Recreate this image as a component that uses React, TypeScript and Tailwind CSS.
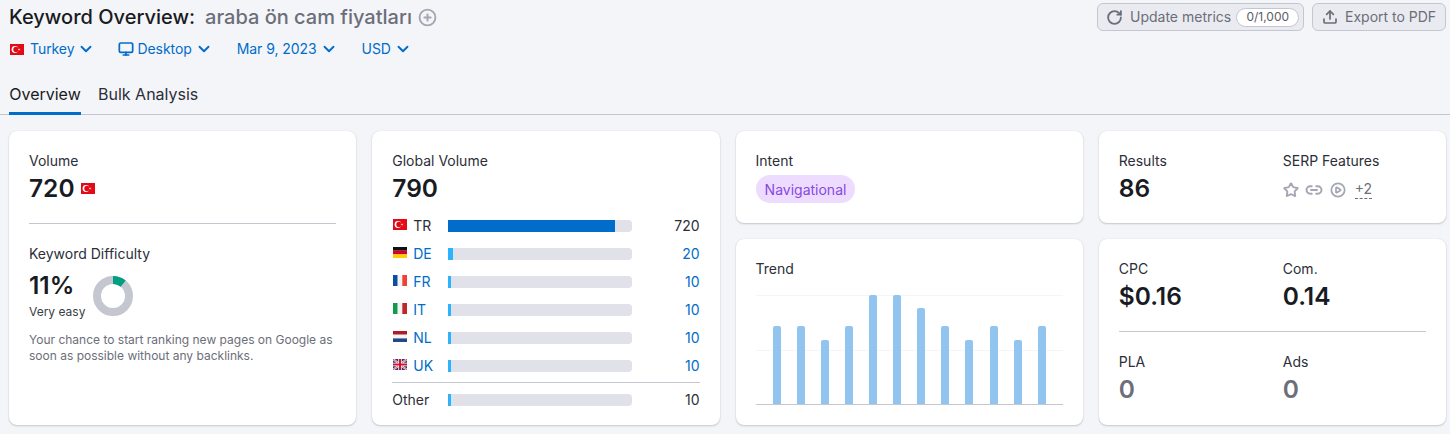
import React from "react";
import { ChevronDown, Monitor, CirclePlus, RotateCw, Upload, Star, Link2, CirclePlay } from "lucide-react";

const Flag = ({ c, className = "" }: { c: string; className?: string }) => (
  <svg width="14" height="11" viewBox="0 0 14 11" className={`shrink-0 ${className}`}>
    {c === "TR" && (
      <>
        <rect width="14" height="11" fill="#e30a17" />
        <circle cx="5" cy="5.5" r="3.4" fill="#fff" />
        <circle cx="6" cy="5.5" r="2.7" fill="#e30a17" />
        <polygon points="7.6,5.5 10.6,4.4 9.4,5.5 10.6,6.6" fill="#fff" />
      </>
    )}
    {c === "DE" && (
      <>
        <rect width="14" height="3.7" fill="#111" />
        <rect y="3.7" width="14" height="3.7" fill="#d80027" />
        <rect y="7.4" width="14" height="3.6" fill="#ffce00" />
      </>
    )}
    {c === "FR" && (
      <>
        <rect width="4.7" height="11" fill="#0b4ea2" />
        <rect x="4.7" width="4.6" height="11" fill="#f4f4f4" />
        <rect x="9.3" width="4.7" height="11" fill="#ef4135" />
      </>
    )}
    {c === "IT" && (
      <>
        <rect width="4.7" height="11" fill="#139a4a" />
        <rect x="4.7" width="4.6" height="11" fill="#f4f4f4" />
        <rect x="9.3" width="4.7" height="11" fill="#c0272d" />
      </>
    )}
    {c === "NL" && (
      <>
        <rect width="14" height="3.7" fill="#ae1c28" />
        <rect y="3.7" width="14" height="3.7" fill="#f4f4f4" />
        <rect y="7.4" width="14" height="3.6" fill="#21468b" />
      </>
    )}
    {c === "UK" && (
      <>
        <rect width="14" height="11" fill="#26377f" />
        <path d="M0 0L14 11M14 0L0 11" stroke="#fff" strokeWidth="2" />
        <path d="M0 0L14 11M14 0L0 11" stroke="#cf142b" strokeWidth="0.8" />
        <path d="M7 0V11M0 5.5H14" stroke="#fff" strokeWidth="3.4" />
        <path d="M7 0V11M0 5.5H14" stroke="#cf142b" strokeWidth="2" />
      </>
    )}
  </svg>
);

const Chev = () => <ChevronDown size={18} strokeWidth={2.5} className="ml-[3px] text-[#006dca] shrink-0" />;

const Label = ({ children }: { children: React.ReactNode }) => (
  <div className="text-sm leading-5 text-[#2c2e38]">{children}</div>
);
const Value = ({ children, muted }: { children: React.ReactNode; muted?: boolean }) => (
  <div className={`mt-px text-[24.5px] leading-8 font-semibold ${muted ? "text-[#6c6e79]" : "text-[#191b23]"}`}>{children}</div>
);
const Card = ({ children, className = "" }: { children: React.ReactNode; className?: string }) => (
  <div className={`rounded-lg bg-white p-5 shadow-[0_1px_2px_rgba(25,27,35,0.2),0_0_1px_rgba(25,27,35,0.15)] ${className}`}>{children}</div>
);

const rows = [
  { c: "TR", v: "720", w: 167, dark: true },
  { c: "DE", v: "20", w: 5 },
  { c: "FR", v: "10", w: 3 },
  { c: "IT", v: "10", w: 3 },
  { c: "NL", v: "10", w: 3 },
  { c: "UK", v: "10", w: 3 },
];

const Bar = ({ w, dark }: { w: number; dark?: boolean }) => (
  <div className="h-3 w-[184px] rounded-r-sm overflow-hidden bg-[#e0e1e9]">
    <div className={`h-full ${dark ? "bg-[#006dca]" : "bg-[#2bb3ff]"}`} style={{ width: w }} />
  </div>
);

const trend = [78, 78, 64, 78, 109, 109, 96, 78, 64, 78, 64, 78];
const barX = [17, 41, 65, 89, 113, 137, 161, 185, 209, 234, 258, 282];

export default function App() {
  return (
    <div className="h-[434px] w-[1450px] overflow-hidden bg-[#f4f5f9] [font-family:Inter,sans-serif] text-[#191b23]">
      <div className="px-[9px] pr-1 pt-[3px]">
        <div className="flex h-7 items-center justify-between">
          <div className="flex items-center text-xl font-medium">
            <span>Keyword Overview:</span>
            <span className="ml-2.5 text-[#6c6e79]">araba ön cam fiyatları</span>
            <CirclePlus size={19} strokeWidth={2.4} className="ml-1.5 text-[#a4a6b3]" />
          </div>
          <div className="flex items-center gap-2 text-sm text-[#6c6e79]">
            <div className="flex h-7 w-[207px] items-center rounded-md border border-[#c4c7cf] bg-[#e9ebf1] pl-[8px]">
              <RotateCw size={17} strokeWidth={2.6} className="text-[#6c6e79]" />
              <span className="ml-[7px]">Update metrics</span>
              <span className="ml-[5px] flex h-[19px] w-[63px] items-center justify-center rounded-full border border-[#c4c7cf] bg-white text-xs text-[#5a5c66]">0/1,000</span>
            </div>
            <div className="flex h-7 w-[134px] items-center rounded-md border border-[#c4c7cf] bg-[#e9ebf1] pl-[9px]">
              <Upload size={16} strokeWidth={2.6} className="text-[#6c6e79]" />
              <span className="ml-[7px]">Export to PDF</span>
            </div>
          </div>
        </div>

        <div className="mt-2 flex h-5 items-center gap-6 text-sm tracking-[-0.07px] text-[#006dca]">
          <div className="flex items-center pl-px">
            <Flag c="TR" />
            <span className="ml-1.5">Turkey</span>
            <Chev />
          </div>
          <div className="flex items-center">
            <Monitor size={16} strokeWidth={2.6} className="-ml-px" />
            <span className="ml-[3px]">Desktop</span>
            <Chev />
          </div>
          <div className="flex items-center">
            <span>Mar 9, 2023</span>
            <Chev />
          </div>
          <div className="flex items-center">
            <span>USD</span>
            <Chev />
          </div>
        </div>
      </div>

      <div className="mt-[15px] flex h-[41px] items-stretch gap-[17px] border-b border-[#c4c7cf] pl-[9px] text-base">
        <div className="-mb-px flex w-[72px] items-center justify-center border-b-[3px] border-[#006dca] pt-px">Overview</div>
        <div className="-mb-px flex items-center border-b-[3px] border-transparent pt-px text-[#2c2e38]">Bulk Analysis</div>
      </div>

      <div className="mt-4 grid h-[294px] grid-cols-4 grid-rows-[294px] gap-4 pl-[9px] pr-1">
        <Card>
          <Label>Volume</Label>
          <div className="flex items-center">
            <Value>720</Value>
            <Flag c="TR" className="ml-1.5 mt-px" />
          </div>
          <div className="mt-[19px] border-t border-[#c4c7cf]" />
          <div className="mt-5"><Label>Keyword Difficulty</Label></div>
          <div className="mt-[5px] flex items-start">
            <div>
              <div className="text-[24.5px] leading-8 font-semibold">11%</div>
              <div className="mt-[3px] text-xs leading-4 text-[#3b3d47]">Very easy</div>
            </div>
            <svg width="40" height="40" viewBox="0 0 40 40" className="ml-2 mt-[7px]">
              <circle cx="20" cy="20" r="16" fill="none" stroke="#c4c7cf" strokeWidth="8" />
              <circle cx="20" cy="20" r="16" fill="none" stroke="#009f81" strokeWidth="8" strokeDasharray="11 100" pathLength={100} transform="rotate(-90 20 20)" />
            </svg>
          </div>
          <p className="mt-3 text-xs leading-4 text-[#6c6e79]">
            Your chance to start ranking new pages on Google as soon as possible without any backlinks.
          </p>
        </Card>

        <Card>
          <Label>Global Volume</Label>
          <Value>790</Value>
          <div className="mt-2">
            {rows.map((r) => (
              <div key={r.c} className="grid h-7 grid-cols-[56px_184px_1fr] items-center">
                <div className={`flex items-center text-sm ${r.dark ? "text-[#2c2e38]" : "text-[#006dca]"}`}>
                  <Flag c={r.c} className="ml-px -mt-1" />
                  <span className="ml-1.5">{r.c}</span>
                </div>
                <Bar w={r.w} dark={r.dark} />
                <div className={`text-right text-sm ${r.dark ? "text-[#2c2e38]" : "text-[#006dca]"}`}>{r.v}</div>
              </div>
            ))}
          </div>
          <div className="mt-0.5 border-t border-[#c4c7cf]" />
          <div className="mt-[3px] grid h-7 grid-cols-[56px_184px_1fr] items-center text-sm text-[#2c2e38]">
            <div>Other</div>
            <Bar w={3} />
            <div className="text-right">10</div>
          </div>
        </Card>

        <div className="grid grid-rows-[92px_186px] gap-4">
          <Card>
            <Label>Intent</Label>
            <div className="mt-1 flex h-7 w-[99px] items-center justify-center rounded-full bg-[#eddcff] pt-px pl-px text-sm text-[#8649e1]">Navigational</div>
          </Card>
          <Card>
            <Label>Trend</Label>
            <svg width="307" height="110" viewBox="0 0 307 110" className="mt-4 block">
              <line x1="0" x2="307" y1="0.5" y2="0.5" stroke="#f4f5f9" />
              <line x1="0" x2="307" y1="55.5" y2="55.5" stroke="#f4f5f9" />
              {trend.map((h, i) => (
                <path key={i} d={`M${barX[i]} 109V${111 - h}a2 2 0 0 1 2 -2h4a2 2 0 0 1 2 2V109Z`} fill="#91c5ef" />
              ))}
              <line x1="0" x2="307" y1="109.5" y2="109.5" stroke="#c4c7cf" />
            </svg>
          </Card>
        </div>

        <div className="grid grid-rows-[92px_186px] gap-4">
          <Card className="grid grid-cols-[164px_1fr]">
            <div>
              <Label>Results</Label>
              <Value>86</Value>
            </div>
            <div>
              <Label>SERP Features</Label>
              <div className="mt-[9px] flex items-center text-[#a4a6b3]">
                <Star size={16} strokeWidth={2.8} />
                <Link2 size={18} strokeWidth={2.6} className="ml-1.5" />
                <CirclePlay size={16} strokeWidth={2.6} className="ml-[7px]" />
                <span className="ml-[9px] border-b border-dashed border-[#6c6e79] text-sm leading-[18px] text-[#6c6e79]">+2</span>
              </div>
            </div>
          </Card>
          <Card>
            <div className="grid grid-cols-[164px_1fr]">
              <div>
                <Label>CPC</Label>
                <Value>$0.16</Value>
              </div>
              <div>
                <Label>Com.</Label>
                <Value>0.14</Value>
              </div>
            </div>
            <div className="mt-[19px] border-t border-[#c4c7cf]" />
            <div className="mt-5 grid grid-cols-[164px_1fr]">
              <div>
                <Label>PLA</Label>
                <Value muted>0</Value>
              </div>
              <div>
                <Label>Ads</Label>
                <Value muted>0</Value>
              </div>
            </div>
          </Card>
        </div>
      </div>
    </div>
  );
}
